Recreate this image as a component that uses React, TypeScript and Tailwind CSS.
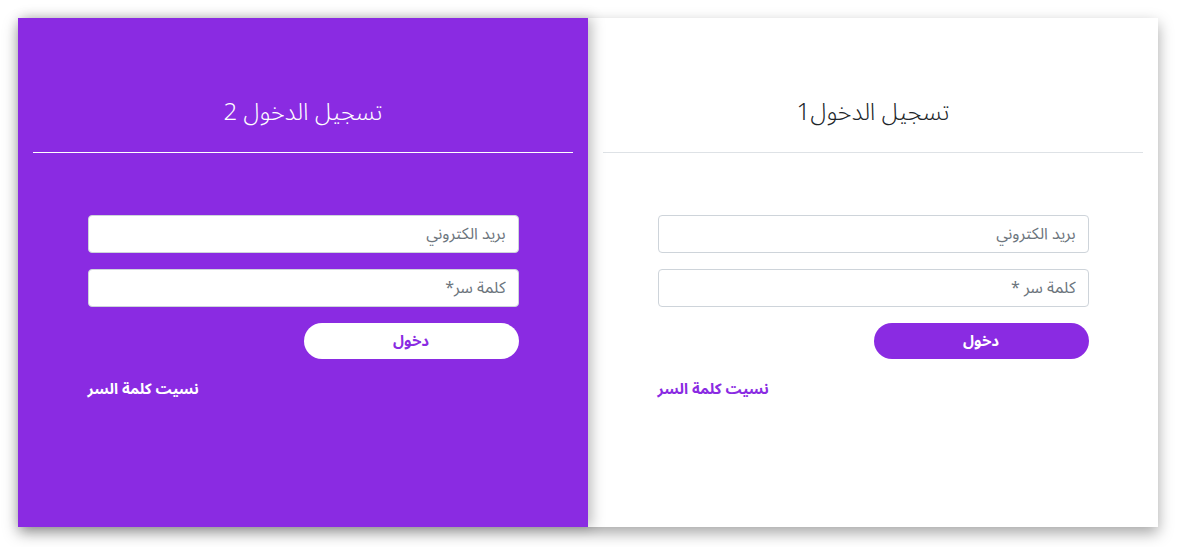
export default function App() {
  const font = { fontFamily: '"Noto Sans Arabic", "Noto Sans", "DejaVu Sans", sans-serif' }
  return (
    <div className="min-h-[547px] bg-white pt-[18px] px-[18px]" style={font}>
      <div dir="rtl" className="flex w-[1140px] shadow-[0_6px_14px_rgba(0,0,0,0.35)]">
        <LoginPanel title="تسجيل الدخول1" variant="light" />
        <LoginPanel title="تسجيل الدخول 2" variant="dark" />
      </div>
    </div>
  )
}

function LoginPanel({ title, variant }: { title: string; variant: 'light' | 'dark' }) {
  const dark = variant === 'dark'
  return (
    <div
      className={`relative w-1/2 h-[509px] px-[15px] ${
        dark ? 'bg-[#8a2be2] shadow-[4px_0_12px_rgba(0,0,0,0.25)]' : 'bg-white'
      }`}
    >
      <h2
        className={`pt-[77px] pb-[21px] text-center text-[24px] leading-[36px] font-light ${
          dark ? 'text-white' : 'text-[#212529]'
        }`}
      >
        {title}
      </h2>
      <hr className={`border-t ${dark ? 'border-white' : 'border-[#dee2e6]'}`} />
      <form className="w-[431px] mx-auto mt-[62px] flex flex-col">
        <input
          type="email"
          placeholder="بريد الكتروني"
          className="h-[38px] px-3 rounded border border-[#ced4da] bg-white text-[16px] placeholder:text-[#6c757d] outline-none"
        />
        <input
          type="password"
          placeholder={dark ? 'كلمة سر*' : 'كلمة سر *'}
          className="mt-[16px] h-[38px] px-3 rounded border border-[#ced4da] bg-white text-[16px] placeholder:text-[#6c757d] outline-none"
        />
        <button
          type="button"
          className={`mt-[16px] w-[215px] h-[36px] rounded-[18px] text-[15px] font-bold ${
            dark ? 'bg-white text-[#8a2be2]' : 'bg-[#8a2be2] text-white'
          }`}
        >
          دخول
        </button>
        <a
          href="#"
          className={`mt-[19px] self-end text-[15px] font-bold ${dark ? 'text-white' : 'text-[#8a2be2]'}`}
        >
          نسيت كلمة السر
        </a>
      </form>
    </div>
  )
}
